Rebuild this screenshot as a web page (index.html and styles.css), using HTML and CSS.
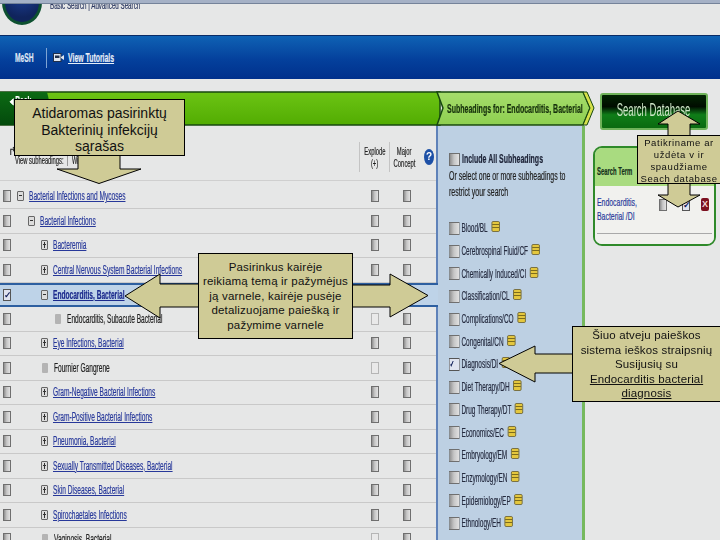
FILE: index.html
```html
<!DOCTYPE html>
<html lang="lt">
<head>
<meta charset="utf-8">
<title>MeSH</title>
<link rel="stylesheet" href="styles.css">
</head>
<body>
<div class="page">
  <div class="strip"></div>
  <header class="site">
    <div class="logo"></div>
    <div class="sitelinks"><span class="nw">Basic Search | Advanced Search</span></div>
  </header>
  <nav class="band">
    <span class="mesh"><span class="nw">MeSH</span></span>
    <span class="bandsep"></span>
    <svg class="cam" viewBox="0 0 11 9" width="11" height="9"><rect x="0.5" y="0.5" width="7.5" height="8" fill="#dfe6f0" stroke="#22304a"/><rect x="2" y="2.5" width="4.500" height="2.500" fill="#22304a"/><path d="M8 4l3-2v5l-3-2z" fill="#dfe6f0"/></svg>
    <a class="tut"><span class="nw">View Tutorials</span></a>
  </nav>
  <main class="work">
    <div class="left">
      <div class="bar">
        <svg class="barbg" viewBox="0 0 596 36" width="596" height="36">
          <defs>
            <linearGradient id="gm" x1="0" y1="0" x2="0" y2="1"><stop offset="0" stop-color="#6cc414"/><stop offset="1" stop-color="#52ac02"/></linearGradient>
            <linearGradient id="gs" x1="0" y1="0" x2="0" y2="1"><stop offset="0" stop-color="#a6dd6c"/><stop offset="1" stop-color="#8ecf50"/></linearGradient>
            <linearGradient id="gt" x1="0" y1="0" x2="0" y2="1"><stop offset="0" stop-color="#0c6a14"/><stop offset="1" stop-color="#034a0c"/></linearGradient>
          </defs>
          <rect x="0" y="1" width="440" height="33" fill="url(#gm)" stroke="#17480f" stroke-width="1.500"/>
          <path d="M0 1H47L55 34H0z" fill="url(#gt)"/>
          <path d="M437 1H583L590 17L583 34H437L443 17z" fill="url(#gs)" stroke="#17480f" stroke-width="1.500"/>
          <path d="M583 1L587 1L594 17L587 34H583L590 17z" fill="#d6e04a" stroke="#17480f"/>
        </svg>
        <span class="back"><span class="nw">&#9666; Back</span></span>
        <span class="subfor"><span class="nw">Subheadings for: Endocarditis, Bacterial</span></span>
      </div>
      <div class="cols">
        <section class="tree">
          <div class="treehead">
            <div class="viewsub">
              <span class="hookarrow">&#8625;</span>
              <span class="viewlabel"><span class="nw">View subheadings:</span></span>
              <span class="viewwith"><span class="nw">With</span></span>
            </div>
            <div class="colh"><span class="nwc">Explode</span><span class="nwc">(+)</span></div>
            <div class="colh"><span class="nwc">Major</span><span class="nwc">Concept</span></div>
            <div class="help">?</div>
          </div>
          <div class="row first"><div class="rm"><i class="cb"></i><i class="tg minus l0"></i><a>Bacterial Infections and Mycoses</a></div><i class="cb"></i><i class="cb"></i></div>
          <div class="row"><div class="rm"><i class="cb"></i><i class="tg minus l1"></i><a>Bacterial Infections</a></div><i class="cb"></i><i class="cb"></i></div>
          <div class="row"><div class="rm"><i class="cb"></i><i class="tg plus l2"></i><a>Bacteremia</a></div><i class="cb"></i><i class="cb"></i></div>
          <div class="row"><div class="rm"><i class="cb"></i><i class="tg plus l2"></i><a>Central Nervous System Bacterial Infections</a></div><i class="cb"></i><i class="cb"></i></div>
          <div class="row sel"><div class="rm"><i class="cb on"></i><i class="tg minus l2"></i><a>Endocarditis, Bacterial</a></div><i class="cb"></i><i class="cb"></i></div>
          <div class="row"><div class="rm"><i class="cb"></i><i class="dot l3"></i><span>Endocarditis, Subacute Bacterial</span></div><i class="cb off"></i><i class="cb"></i></div>
          <div class="row"><div class="rm"><i class="cb"></i><i class="tg plus l2"></i><a>Eye Infections, Bacterial</a></div><i class="cb"></i><i class="cb"></i></div>
          <div class="row"><div class="rm"><i class="cb"></i><i class="dot l2d"></i><span>Fournier Gangrene</span></div><i class="cb off"></i><i class="cb"></i></div>
          <div class="row"><div class="rm"><i class="cb"></i><i class="tg plus l2"></i><a>Gram-Negative Bacterial Infections</a></div><i class="cb"></i><i class="cb"></i></div>
          <div class="row"><div class="rm"><i class="cb"></i><i class="tg plus l2"></i><a>Gram-Positive Bacterial Infections</a></div><i class="cb"></i><i class="cb"></i></div>
          <div class="row"><div class="rm"><i class="cb"></i><i class="tg plus l2"></i><a>Pneumonia, Bacterial</a></div><i class="cb"></i><i class="cb"></i></div>
          <div class="row"><div class="rm"><i class="cb"></i><i class="tg plus l2"></i><a>Sexually Transmitted Diseases, Bacterial</a></div><i class="cb"></i><i class="cb"></i></div>
          <div class="row"><div class="rm"><i class="cb"></i><i class="tg plus l2"></i><a>Skin Diseases, Bacterial</a></div><i class="cb"></i><i class="cb"></i></div>
          <div class="row"><div class="rm"><i class="cb"></i><i class="tg plus l2"></i><a>Spirochaetales Infections</a></div><i class="cb"></i><i class="cb"></i></div>
          <div class="row"><div class="rm"><i class="cb"></i><i class="dot l2d"></i><span>Vaginosis, Bacterial</span></div><i class="cb off"></i><i class="cb"></i></div>
        </section>
        <aside class="subs">
          <div class="inc"><i class="cb big"></i><b class="nw">Include All Subheadings</b></div>
          <p class="intro"><span class="nw">Or select one or more subheadings to</span><br><span class="nw">restrict your search</span></p>
          <ul class="sublist">
            <li><i class="cb big"></i>Blood/BL<i class="note"></i></li>
            <li><i class="cb big"></i>Cerebrospinal Fluid/CF<i class="note"></i></li>
            <li><i class="cb big"></i>Chemically Induced/CI<i class="note"></i></li>
            <li><i class="cb big"></i>Classification/CL<i class="note"></i></li>
            <li><i class="cb big"></i>Complications/CO<i class="note"></i></li>
            <li><i class="cb big"></i>Congenital/CN<i class="note"></i></li>
            <li><i class="cb big on"></i>Diagnosis/DI<i class="note"></i></li>
            <li><i class="cb big"></i>Diet Therapy/DH<i class="note"></i></li>
            <li><i class="cb big"></i>Drug Therapy/DT<i class="note"></i></li>
            <li><i class="cb big"></i>Economics/EC<i class="note"></i></li>
            <li><i class="cb big"></i>Embryology/EM<i class="note"></i></li>
            <li><i class="cb big"></i>Enzymology/EN<i class="note"></i></li>
            <li><i class="cb big"></i>Epidemiology/EP<i class="note"></i></li>
            <li><i class="cb big"></i>Ethnology/EH<i class="note"></i></li>
          </ul>
        </aside>
      </div>
    </div>
    <div class="side">
      <button class="dbbtn"><span class="nwc">Search Database</span></button>
      <div class="termbox">
        <div class="termhead"><span class="nw">Search Term</span></div>
        <div class="termbody">
          <div class="termrow">
            <a class="termlink"><span class="nw">Endocarditis,</span><br><span class="nw">Bacterial /DI</span></a>
            <i class="cb"></i>
            <i class="cb on"></i>
            <span class="del">X</span>
          </div>
          <div class="termrule"></div>
        </div>
      </div>
    </div>
  </main>

  <svg class="arrows" viewBox="0 0 720 540" width="720" height="540">
    <g fill="#cfcb96" stroke="#000" stroke-width="1">
      <path d="M78 150V169H57L99 183.500L141 169H120V150z"/>
      <path d="M125 296L160 274V284H210V307H160V318z"/>
      <path d="M428 295.500L390 274V285H340V307H390V317z"/>
      <path d="M499 363.500L535 346V354H590V373H535V382z"/>
      <path d="M678 111L658 124H668V140H690V124H700z"/>
      <path d="M678 207L658 195H668V178H690V195H700z"/>
    </g>
  </svg>
  <div class="call c1">Atidaromas pasirinktų<br>Bakterinių infekcijų<br>sąrašas</div>
  <div class="call c2">Pasirinkus kairėje<br>reikiamą temą ir pažymėjus<br>ją varnele, kairėje pusėje<br>detalizuojame paiešką ir<br>pažymime varnele</div>
  <div class="call c3">Šiuo atveju paieškos<br>sistema ieškos straipsnių<br>Susijusių su<br><u>Endocarditis bacterial</u><br><u>diagnosis</u></div>
  <div class="call c4">Patikriname ar<br>uždėta v ir<br>spaudžiame<br>Seach database</div>
</div>
</body>
</html>
```

FILE: styles.css
```css
* { box-sizing: border-box; }
html, body { margin: 0; padding: 0; }
body { width: 720px; height: 540px; overflow: hidden; background: #e6e7e7; }
.page { position: relative; width: 720px; height: 540px; overflow: hidden; font-family: "Liberation Sans", sans-serif; font-size: 12px; color: #222; }
i { display: block; font-style: normal; }
.nw { display: inline-block; white-space: nowrap; transform: scaleX(.56); transform-origin: 0 50%; -webkit-text-stroke: .2px currentColor; }
.nwc { display: inline-block; white-space: nowrap; transform: scaleX(.56); transform-origin: 50% 50%; }

.strip { position: relative; z-index: 1; height: 4px; background: #a5b1c6; border-bottom: 1px solid #75839a; }
.site { height: 31px; position: relative; display: flex; padding-left: 50px; filter: blur(.3px); }
.logo { position: absolute; left: 2px; top: -24px; width: 40px; height: 45px; border-radius: 50%; background: radial-gradient(circle at 50% 30%, #1c3f96, #10245c 70%); border: 3px solid #0d5130; }
.sitelinks { font-size: 10px; line-height: 10px; margin-top: -3px; color: #2a3760; }
.sitelinks .nw { transform: scaleX(.62); }

.band { height: 44px; display: flex; align-items: center; padding-left: 15px; border-top: 1px solid #0a2b66; background: linear-gradient(#0f62b4, #04409c 55%, #00308c); color: #dfe8f4; }
.mesh { font-weight: bold; font-size: 12px; width: 31px; }
.bandsep { width: 1px; height: 20px; background: #7fa4d4; margin-right: 6px; }
.cam { margin-right: 4px; }
.tut { font-size: 13px; font-weight: bold; color: #e6eef8; width: 48px; }
.tut .nw { text-decoration: underline; transform: scaleX(.53); }

.work { display: flex; margin-top: 12px; filter: blur(.3px); }
.left { width: 592px; }
.bar { position: relative; height: 35px; display: flex; align-items: center; justify-content: space-between; padding: 0 7px 0 10px; }
.barbg { position: absolute; left: 0; top: 0; }
.back { position: relative; color: #fff; font-weight: bold; font-size: 12px; margin-top: -16px; }
.subfor { position: relative; font-weight: bold; font-size: 12px; color: #16300c; width: 138px; }
.subfor .nw { transform: scaleX(.585); }

.cols { display: flex; }
.tree { width: 436px; }
.treehead { height: 55px; display: grid; grid-template-columns: 1fr 30px 30px 17px; align-items: center; border-bottom: 1px solid #cfcfcf; padding-top: 8px; padding-left: 8px; }
.viewsub { display: flex; align-items: flex-end; position: relative; margin-bottom: 4px; }
.hookarrow { font-size: 11px; color: #111; width: 7px; margin-bottom: 8px; }
.viewlabel { font-size: 10px; width: 53px; border-right: 1px solid #999; }
.viewlabel .nw { transform: scaleX(.58); }
.viewwith { font-size: 10px; margin-left: 4px; }
.colh { display: flex; flex-direction: column; align-items: center; font-size: 10.500px; line-height: 12px; border-left: 1px solid #c4c4c4; height: 30px; padding-top: 3px; -webkit-text-stroke: .2px currentColor; }
.help { width: 10px; height: 16px; border-radius: 50%; background: #1d50a6; color: #fff; font-weight: bold; font-size: 10px; line-height: 16px; text-align: center; margin-left: 5px; }

.row { height: 24.500px; display: grid; grid-template-columns: 1fr 32px 32px 13px; align-items: center; justify-items: center; border-bottom: 1px solid #c9c9c9; }
.row.first { height: 28px; padding-top: 3px; }
.rm { justify-self: stretch; display: flex; align-items: center; padding-left: 3px; white-space: nowrap; font-size: 12px; min-width: 0; }
.rm a, .rm span { display: inline-block; transform: scaleX(.55); transform-origin: 0 50%; -webkit-text-stroke: .2px currentColor; }
.rm a { color: #27389a; text-decoration: underline; }
.rm span { color: #222; }
.sel { position: relative; width: 438px; background: #bed3e8; border-top: 2px solid #2d5fa0; border-bottom: 2px solid #2d5fa0; grid-template-columns: 1fr 32px 32px 15px; }
.sel a { font-weight: bold; color: #1b2a8c; }

.cb { width: 8px; height: 12px; flex: none; border: 1px solid #6f6f6f; background: linear-gradient(90deg, #8f8f8f, #c6c6c6 45%, #e2e2e2); }
.cb.off { background: #e9e9e9; border-color: #b5b5b5; }
.cb.big { width: 11px; height: 13px; margin-right: 1px; }
.cb.on { position: relative; background: #dfe3ef; border-color: #555; }
.cb.on::after { content: "\2713"; position: absolute; left: 0; top: -2px; font-size: 9px; line-height: 14px; font-weight: bold; color: #12205a; }

.tg { position: relative; width: 7px; height: 10px; flex: none; background: #dcdcdc; border: 1px solid #666; border-radius: 1px; }
.tg::before { content: ""; position: absolute; left: 1px; right: 1px; top: 3px; height: 1px; background: #333; }
.plus::after { content: ""; position: absolute; top: 1px; bottom: 1px; left: 2px; width: 1px; background: #333; }
.l0 { margin: 0 5px 0 6px; }
.l1 { margin: 0 5px 0 17px; }
.l2 { margin: 0 5px 0 30px; }
.dot { width: 6px; height: 10px; flex: none; background: #b4b4b4; border-radius: 1px; }
.l3 { margin: 0 6px 0 44px; }
.l2d { margin: 0 6px 0 31px; }

.subs { width: 149px; height: 420px; border-left: 2px solid #5f82b9; border-right: 3px solid #76b95e; background: #bdd0e3; padding: 26px 0 0 11px; }
.inc { display: flex; align-items: center; font-size: 12.500px; height: 14px; color: #1c2236; }
.inc .cb { margin-right: 2px; }
.intro { margin: 2px 0 0; font-size: 12px; line-height: 16px; }
.intro .nw { transform: scaleX(.58); }
.sublist { list-style: none; margin: 17px 0 0; padding: 0; width: 252px; transform: scaleX(.54); transform-origin: 0 0; -webkit-text-stroke: .2px currentColor; }
.sublist li { height: 22.700px; display: flex; align-items: center; font-size: 12px; white-space: nowrap; color: #262c40; }
.sublist .cb.big { width: 20px; margin-right: 3px; }
.note { width: 15px; height: 11px; margin: -3px 0 0 7px; flex: none; border: 1px solid #66540f; border-radius: 2px; background: linear-gradient(#e4c73e 0 2px, #7d6c1c 2px 3px, #e4c73e 3px 5px, #7d6c1c 5px 6px, #e4c73e 6px); }

.side { padding-left: 8px; }
.dbbtn { display: flex; justify-content: center; align-items: center; width: 108px; height: 37px; margin: 2px 0 0; padding: 0 0 2px; border: 2px solid #6fb35a; border-radius: 3px; background: linear-gradient(#022402, #000c00 35%, #0f7d18 60%, #0a6a10); color: #cfe6c8; font-family: inherit; font-size: 18px; overflow: hidden; }
.dbbtn .nwc { transform: scaleX(.53); }
.termbox { width: 123px; height: 100px; margin: 16px 0 0 -7px; border: 2px solid #2f8a2a; border-radius: 9px; overflow: hidden; }
.termhead { height: 38px; background: #a9db80; padding: 17px 0 0 2px; font-size: 10.500px; font-weight: bold; color: #14301a; }
.termbody { background: #f1f1ee; height: 60px; padding: 10px 2px 0 2px; }
.termrow { display: flex; align-items: flex-start; height: 37px; }
.termlink { width: 62px; font-size: 11.500px; line-height: 13.500px; color: #27389a; }
.termlink .nw { transform: scaleX(.6); }
.termrow .cb:nth-of-type(1) { margin-top: 3px; }
.termrow .cb:nth-of-type(2) { margin: 3px 0 0 15px; }
.del { width: 8px; height: 13px; margin: 2px 0 0 11px; background: #7c1020; border-radius: 2px; color: #f2d6d6; font-size: 9px; font-weight: bold; text-align: center; line-height: 13px; }
.termrule { height: 1px; background: #a9a9a9; }

.arrows { position: absolute; left: 0; top: 0; z-index: 2; }
.call { position: absolute; z-index: 3; background: #cfcb96; border: 1px solid #000; color: #111; font-family: "Liberation Sans", sans-serif; text-align: center; white-space: nowrap; overflow: hidden; }
.c1 { left: 14px; top: 99px; width: 171px; height: 57px; font-size: 14px; line-height: 16.500px; padding-top: 5px; }
.c2 { left: 198px; top: 253px; width: 155px; height: 86px; font-size: 11.500px; line-height: 14.400px; letter-spacing: .2px; padding-top: 6px; }
.c3 { left: 572px; top: 326px; width: 149px; height: 76px; font-size: 11.500px; line-height: 14.500px; letter-spacing: .15px; padding-top: 1px; }
.c4 { left: 637px; top: 135px; width: 84px; height: 49px; font-size: 9.500px; line-height: 12px; letter-spacing: .6px; padding-top: 1px; }
```
